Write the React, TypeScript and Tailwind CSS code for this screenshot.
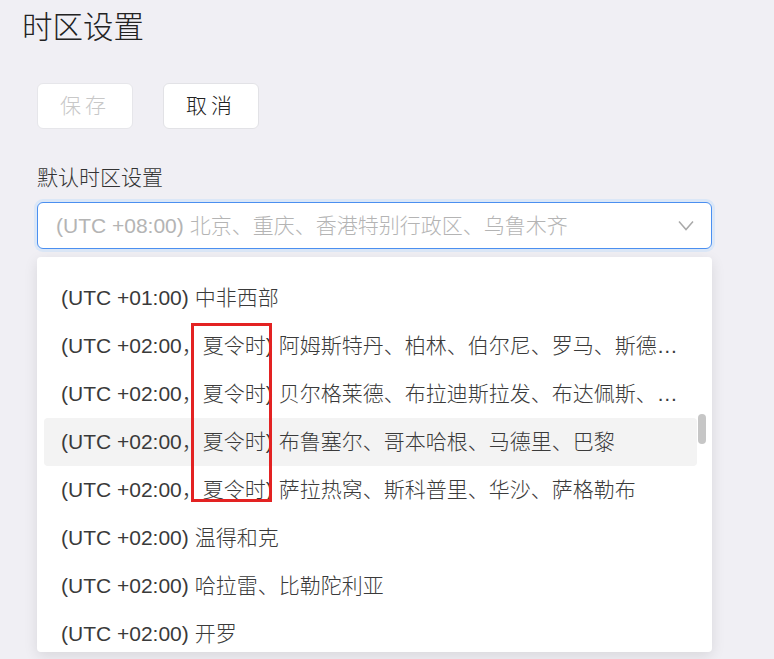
const zones = [
  '(UTC +01:00) 中非西部',
  '(UTC +02:00，夏令时) 阿姆斯特丹、柏林、伯尔尼、罗马、斯德哥尔摩、维也纳',
  '(UTC +02:00，夏令时) 贝尔格莱德、布拉迪斯拉发、布达佩斯、卢布尔雅那、布拉格',
  '(UTC +02:00，夏令时) 布鲁塞尔、哥本哈根、马德里、巴黎',
  '(UTC +02:00，夏令时) 萨拉热窝、斯科普里、华沙、萨格勒布',
  '(UTC +02:00) 温得和克',
  '(UTC +02:00) 哈拉雷、比勒陀利亚',
  '(UTC +02:00) 开罗',
];

export default function App() {
  const activeIndex = 3;

  return (
    <div className="min-h-screen bg-[#f0eff4] font-['Liberation_Sans','Noto_Sans_CJK_SC',sans-serif] font-light text-[#3a3a3a]">
      <div className="pl-[22px] pt-[9px]">
        <h1 className="text-[30.5px] leading-[36px] text-[#222]">时区设置</h1>
      </div>

      <div className="pl-[37px] w-[712px]">
        {/* Actions */}
        <div className="mt-[38px] flex gap-[30px]">
          <button
            disabled
            className="w-[96px] h-[46px] rounded-[6px] border border-[#e6e6ea] bg-white text-[21px] tracking-[4px] text-[#c8c8c8]"
          >
            保存
          </button>
          <button className="w-[96px] h-[46px] rounded-[6px] border border-[#e2e2e6] bg-white text-[21px] tracking-[4px] text-[#222]">
            取消
          </button>
        </div>

        <div className="mt-[35px] text-[21px] leading-[28px] text-[#333]">默认时区设置</div>

        {/* Select */}
        <div className="mt-[10px] h-[47px] flex items-center justify-between rounded-[6px] border border-[#4b8ff0] bg-white pl-[18px] pr-[17px] shadow-[0_0_0_3px_#dbe7f7]">
          <span className="text-[21px] text-[#b4b4b4] truncate">
            (UTC +08:00) 北京、重庆、香港特别行政区、乌鲁木齐
          </span>
          <svg width="16" height="11" viewBox="0 0 16 11" className="shrink-0">
            <polyline points="1,1.5 8,9.5 15,1.5" fill="none" stroke="#a9a9a9" strokeWidth="1.5" />
          </svg>
        </div>

        {/* Dropdown */}
        <div className="relative mt-[8px] h-[395px] overflow-hidden rounded-[4px] bg-white shadow-[0_4px_14px_rgba(0,0,0,0.1)]">
          <div className="pt-[17px] pl-[7px] pr-[15px]">
            {zones.map((zone, i) => (
              <div
                key={zone}
                className={`h-[48px] flex items-center rounded-[4px] pl-[17px] pr-[18px] text-[21px] ${
                  i === activeIndex ? 'bg-[#f3f3f3]' : ''
                }`}
              >
                <span className="truncate">{zone}</span>
              </div>
            ))}
          </div>

          {/* Scrollbar thumb */}
          <div className="absolute left-[661px] top-[157px] w-[8px] h-[30px] rounded-full bg-[#c6c6c6]" />

          {/* Highlight box */}
          <div className="absolute left-[154px] top-[66px] w-[81px] h-[179px] border-[3px] border-[#e32222]" />
        </div>
      </div>
    </div>
  );
}
